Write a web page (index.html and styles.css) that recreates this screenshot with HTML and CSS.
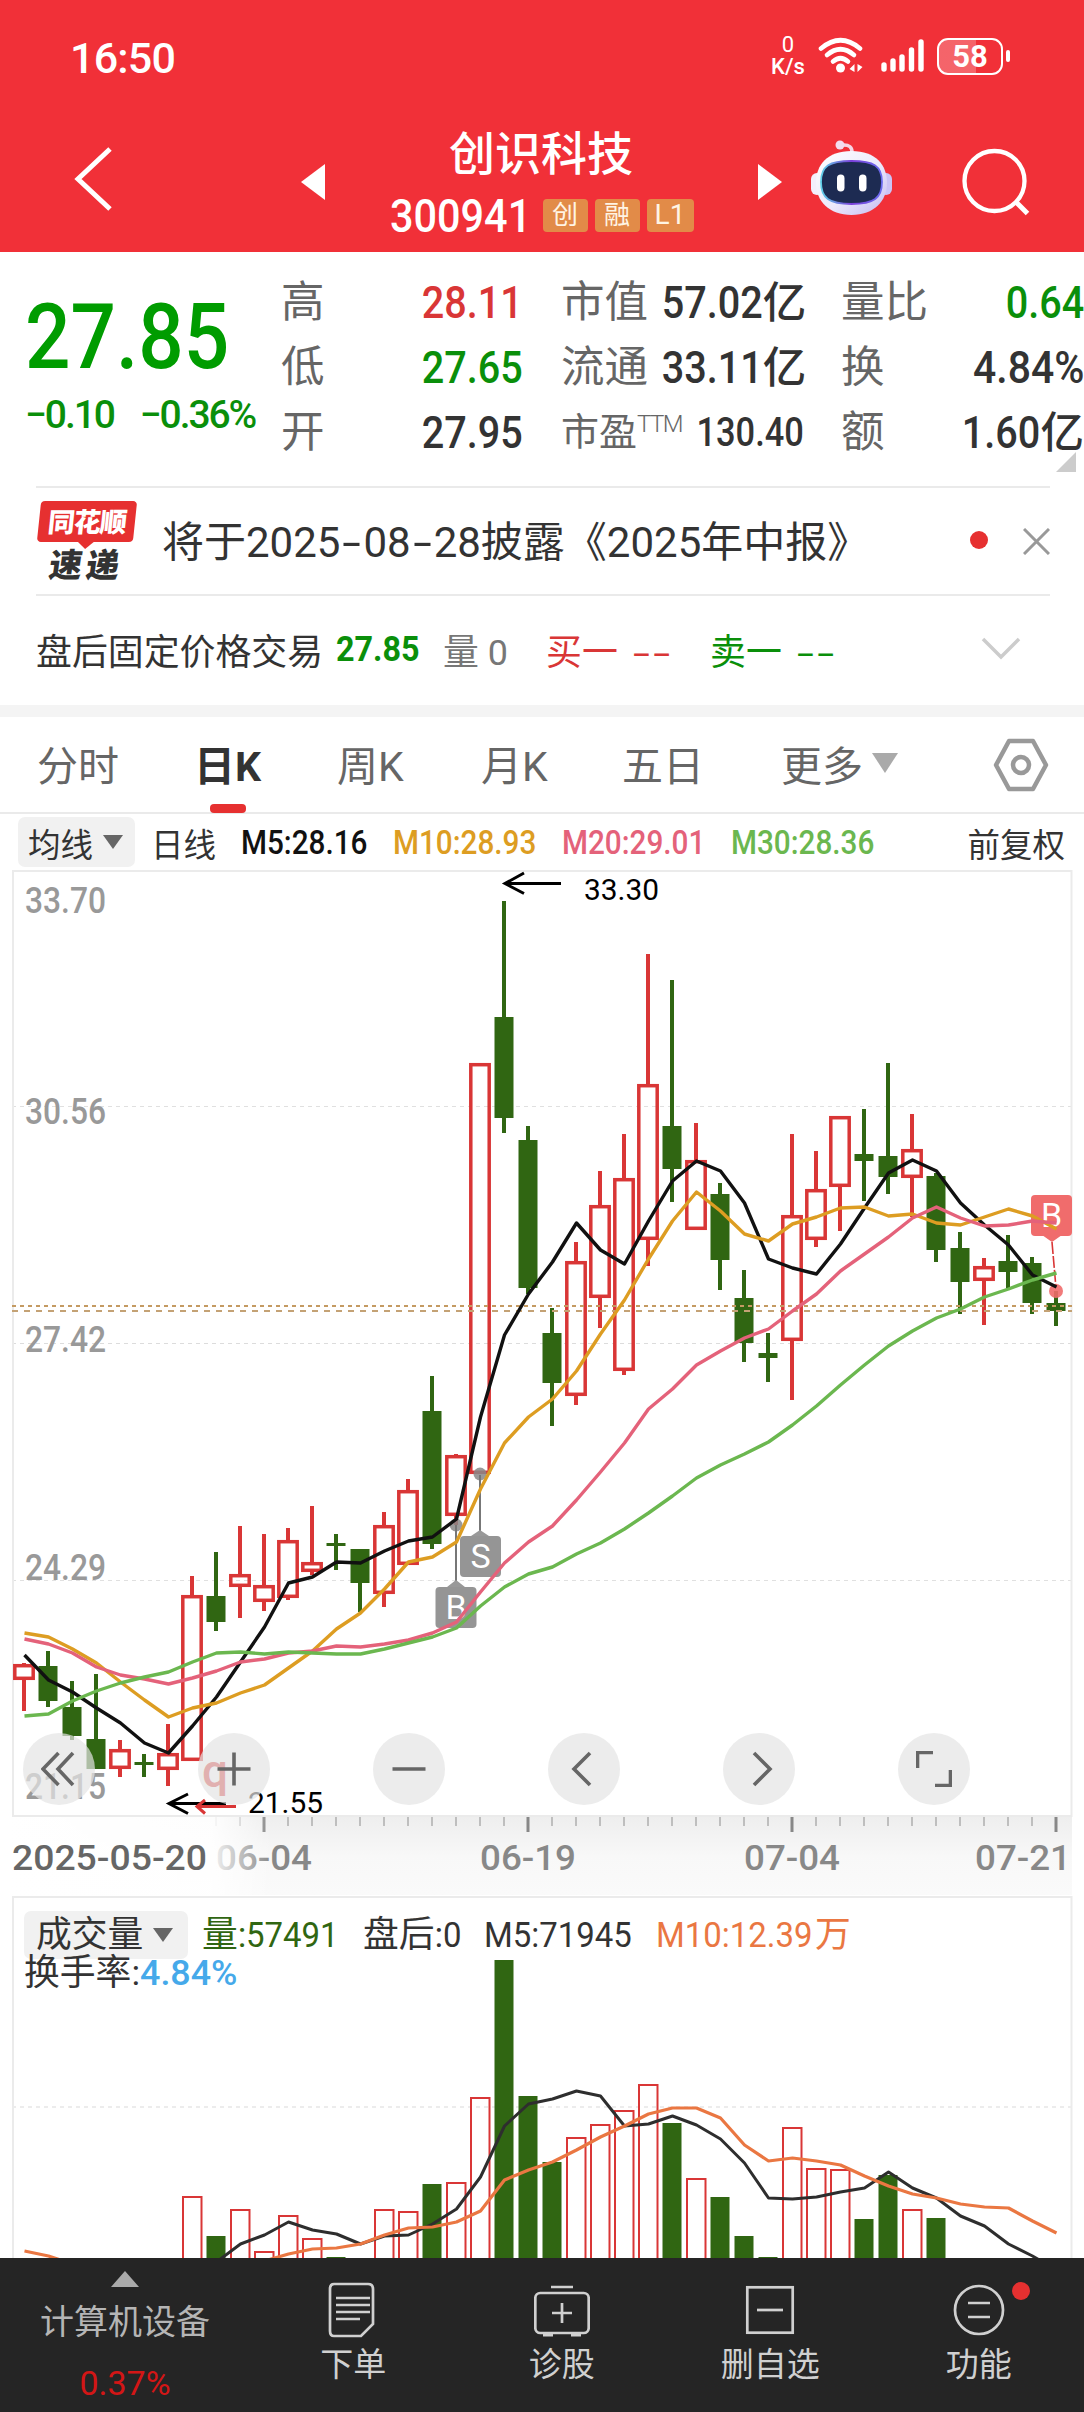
FILE: index.html
```html
<!DOCTYPE html>
<html lang="zh-CN">
<head>
    <meta charset="UTF-8">
    <meta name="viewport" content="width=device-width, initial-scale=1.0">
    <title>创识科技 300941</title>
    <link rel="stylesheet" href="styles.css">
</head>
<body>
    <header class="top">
        <div class="status-bar">
            <span class="clock">16:50</span>
            <div class="status-icons">
                <div class="net-speed"><span>0</span><span>K/s</span></div>
                <svg class="wifi" width="46" height="38" viewBox="0 0 46 38" fill="none" stroke="#fff" stroke-width="4.6" stroke-linecap="round">
                    <path d="M3 11.5Q22.500-5 42 11.500"/>
                    <path d="M9 18Q22.500 6.500 36 18"/>
                    <path d="M15 24.500Q22.500 18 30 24.500"/>
                    <circle cx="22.500" cy="31" r="4.500" fill="#fff" stroke="none"/>
                    <path d="M36.500 27v8l-5-3zM39.500 27v8l5-5z" fill="#fff" stroke="none"/>
                </svg>
                <svg class="signal" width="44" height="38" viewBox="0 0 44 38" stroke="#fff" stroke-width="5.4" stroke-linecap="round">
                    <path d="M3 28v4M12 24v8M21 20v12M30.500 13v19M40 5v27"/>
                </svg>
                <div class="battery"><span>58</span></div>
            </div>
        </div>
        <div class="title-bar">
            <svg class="back" width="42" height="70" viewBox="0 0 42 70" fill="none" stroke="#fff" stroke-width="5">
                <path d="M37 5L5 35L37 65"/>
            </svg>
            <svg class="prev" width="24" height="36" viewBox="0 0 24 36"><path d="M24 0v36L0 18z" fill="#fff"/></svg>
            <div class="stock">
                <h1>创识科技</h1>
                <div class="stock-code">
                    <span class="code">300941</span>
                    <span class="tag">创</span>
                    <span class="tag">融</span>
                    <span class="tag tag-l1">L1</span>
                </div>
            </div>
            <svg class="next" width="24" height="36" viewBox="0 0 24 36"><path d="M0 0v36l24-18z" fill="#fff"/></svg>
            <svg class="robot" width="84" height="78" viewBox="0 0 84 78">
                <defs>
                    <linearGradient id="head" x1="0" y1="0" x2="1" y2="1">
                        <stop offset="0" stop-color="#fff"/>
                        <stop offset=".55" stop-color="#ece9fb"/>
                        <stop offset="1" stop-color="#c3baf2"/>
                    </linearGradient>
                    <linearGradient id="visor" x1="0" y1="0" x2="1" y2="0">
                        <stop offset="0" stop-color="#5fd0e8"/>
                        <stop offset=".5" stop-color="#7a3fd8"/>
                        <stop offset="1" stop-color="#6a6cf0"/>
                    </linearGradient>
                </defs>
                <path d="M32 6q11-1 10 9" fill="none" stroke="#f6d5e4" stroke-width="3.500"/>
                <circle cx="30" cy="6" r="4.500" fill="#f3dcef"/>
                <rect x="1" y="34" width="12" height="22" rx="6" fill="#f3effc"/>
                <rect x="70" y="34" width="12" height="22" rx="6" fill="#cbc4f6"/>
                <path d="M41.500 12C66 12 77 26 77 44S64 76 41.500 76S6 62 6 44S17 12 41.500 12z" fill="url(#head)"/>
                <path d="M41.500 22C64 22 72 27 72 43S64 65 41.500 65S11 59 11 43S19 22 41.500 22z" fill="#1d2b52" stroke="url(#visor)" stroke-width="1.800"/>
                <rect x="27" y="35.500" width="7.500" height="17" rx="3.700" fill="#fff"/>
                <rect x="49" y="35.500" width="7.500" height="17" rx="3.700" fill="#fff"/>
            </svg>
            <svg class="search" width="70" height="70" viewBox="0 0 70 70" fill="none" stroke="#fff">
                <circle cx="34.500" cy="34" r="30" stroke-width="4.300"/>
                <path d="M55 54L67.500 66.500" stroke-width="5"/>
            </svg>
        </div>
    </header>

    <section class="quote">
        <div class="price-box">
            <div class="price">27.85</div>
            <div class="change"><span>−0.10</span><span>−0.36%</span></div>
        </div>
        <div class="stats">
            <div class="stat"><label>高</label><b class="num up">28.11</b></div>
            <div class="stat"><label>市值</label><b><i class="num">57.02</i>亿</b></div>
            <div class="stat"><label>量比</label><b class="num down">0.64</b></div>
            <div class="stat"><label>低</label><b class="num down">27.65</b></div>
            <div class="stat"><label>流通</label><b><i class="num">33.11</i>亿</b></div>
            <div class="stat"><label>换</label><b class="num pct">4.84%</b></div>
            <div class="stat"><label>开</label><b class="num">27.95</b></div>
            <div class="stat stat-small"><label>市盈<sup>TTM</sup></label><b class="num">130.40</b></div>
            <div class="stat"><label>额</label><b><i class="num">1.60</i>亿</b></div>
        </div>
        <svg class="corner" width="20" height="20" viewBox="0 0 20 20"><path d="M20 0v20H0z" fill="#ccc"/></svg>
    </section>

    <section class="notice">
        <div class="notice-logo">
            <span class="logo-top">同花顺</span>
            <span class="logo-bottom">速递</span>
        </div>
        <p>将于2025<s>-</s>08<s>-</s>28披露《2025年中报》</p>
        <span class="red-dot"></span>
        <svg width="27" height="27" viewBox="0 0 27 27" stroke="#999" stroke-width="3"><path d="M1 1l25 25M26 1L1 26"/></svg>
    </section>

    <section class="after-hours">
        <span class="ah-name">盘后固定价格交易</span>
        <span class="ah-price">27.85</span>
        <span class="ah-vol">量 0</span>
        <span class="ah-buy">买一 <s>--</s></span>
        <span class="ah-sell">卖一 <s>--</s></span>
        <svg width="40" height="24" viewBox="0 0 40 24" fill="none" stroke="#ccc" stroke-width="3.500"><path d="M2 2l18 18L38 2"/></svg>
    </section>

    <nav class="tabs">
        <span class="tab">分时</span>
        <span class="tab active">日K</span>
        <span class="tab">周K</span>
        <span class="tab">月K</span>
        <span class="tab">五日</span>
        <span class="tab more">更多 <svg width="26" height="20" viewBox="0 0 26 20"><path d="M0 0h26L13 20z" fill="#aaa"/></svg></span>
        <svg class="settings" width="56" height="54" viewBox="0 0 56 54" fill="none" stroke="#999" stroke-width="4.500" stroke-linejoin="round">
            <path d="M16 3h24L53 27L40 51H16L3 27z"/>
            <circle cx="28" cy="27" r="8"/>
        </svg>
    </nav>

    <div class="ma-bar">
        <span class="select">均线 <svg width="20" height="14" viewBox="0 0 20 14"><path d="M0 0h20L10 14z" fill="#666"/></svg></span>
        <span class="period">日线</span>
        <span class="ma ma5">M5:28.16</span>
        <span class="ma ma10">M10:28.93</span>
        <span class="ma ma20">M20:29.01</span>
        <span class="ma ma30">M30:28.36</span>
        <span class="adjust">前复权</span>
    </div>

    <section class="kline">
        <svg id="kline" width="1084" height="1026" viewBox="0 870 1084 1026">
            <defs>
                <linearGradient id="axis-v" x1="0" y1="0" x2="0" y2="1">
                    <stop offset="0" stop-color="#eeeeee"/>
                    <stop offset=".5" stop-color="#f8f8f8"/>
                    <stop offset="1" stop-color="#fafafa"/>
                </linearGradient>
                <linearGradient id="axis-h" x1="0" y1="0" x2="1" y2="0">
                    <stop offset="0" stop-color="#fff"/>
                    <stop offset=".78" stop-color="#fff" stop-opacity=".9"/>
                    <stop offset="1" stop-color="#fff" stop-opacity="0"/>
                </linearGradient>
            </defs>
        </svg>
        <div class="chart-tools">
            <button><svg viewBox="0 0 36 36"><path d="M17.500 2L2 18l15.500 16M32 2L17 18l15 16"/></svg></button>
            <button><svg viewBox="0 0 36 36"><path d="M18 1.500v33M1.500 18h33"/></svg></button>
            <button><svg viewBox="0 0 36 36"><path d="M1.500 18h33"/></svg></button>
            <button><svg viewBox="0 0 36 36"><path d="M24 2L8 18l16 16"/></svg></button>
            <button><svg viewBox="0 0 36 36"><path d="M13 2l16 16L13 34"/></svg></button>
            <button><svg viewBox="0 0 36 36"><path d="M1.500 17V1.500H17M34.500 19v15.500H19"/></svg></button>
        </div>
    </section>

    <section class="volume">
        <div class="vol-info">
            <div class="vol-row">
                <span class="select">成交量 <svg width="20" height="14" viewBox="0 0 20 14"><path d="M0 0h20L10 14z" fill="#666"/></svg></span>
                <span class="v-now">量:<i>57491</i></span>
                <span class="v-after">盘后:<i>0</i></span>
                <span class="v-m5"><i>M5:71945</i></span>
                <span class="v-m10"><i>M10:12.39</i>万</span>
            </div>
            <div class="turnover">换手率:<i>4.84%</i></div>
        </div>
        <svg id="volume" width="1084" height="362" viewBox="0 1896 1084 362"></svg>
    </section>

    <footer class="bottom-nav">
        <div class="nav-item sector">
            <svg width="28" height="16" viewBox="0 0 28 16"><path d="M14 0l14 16H0z" fill="#aaa"/></svg>
            <span>计算机设备</span>
            <em>0.37%</em>
        </div>
        <div class="nav-item">
            <svg width="56" height="56" viewBox="0 0 56 56">
                <path d="M9 2h34q5 0 5 5v35L36 54H9q-4 0-4-5V7q0-5 4-5z"/>
                <path d="M11 16h34M11 23h34M11 30h34M11 37h24" stroke-width="2.600"/>
            </svg>
            <span>下单</span>
        </div>
        <div class="nav-item">
            <svg width="56" height="56" viewBox="0 0 56 56">
                <rect x="1.300" y="11" width="53.400" height="40" rx="5"/>
                <path d="M17 5h22M28 21v20M18 31h20"/>
                <path d="M9 52.500h10M37 52.500h10" stroke-width="4"/>
            </svg>
            <span>诊股</span>
        </div>
        <div class="nav-item">
            <svg width="56" height="56" viewBox="0 0 56 56">
                <rect x="5.300" y="5.300" width="45.400" height="45.400"/>
                <path d="M15 28h26"/>
            </svg>
            <span>删自选</span>
        </div>
        <div class="nav-item">
            <svg width="56" height="56" viewBox="0 0 56 56">
                <circle cx="28" cy="28" r="24"/>
                <path d="M17 21h22M17 35h22"/>
            </svg>
            <span>功能</span>
            <b class="nav-dot"></b>
        </div>
    </footer>

    <script src="script.js"></script>
</body>
</html>
```

FILE: styles.css
```css
:root {
    --red: #d93636;
    --green: #0a8f0a;
    --dark: #333;
    --gray: #666;
    --line: #eaeaea;
}

* {
    box-sizing: border-box;
}

body {
    margin: 0;
    width: 1084px;
    height: 2412px;
    overflow: hidden;
    background: #fff;
    color: var(--dark);
    font-family: Roboto, "Noto Sans CJK SC", sans-serif;
    white-space: nowrap;
}

svg {
    display: block;
    flex: none;
}

i, em, s {
    font-style: normal;
    text-decoration: none;
}

/* header */
.top {
    height: 252px;
    background: #f13038;
    color: #fff;
}

.status-bar {
    height: 112px;
    padding: 0 74px 0 70px;
    display: flex;
    justify-content: space-between;
    align-items: center;
}

.clock {
    font-size: 43px;
    font-weight: 500;
    letter-spacing: -0.8px;
    padding-top: 3px;
}

.status-icons {
    display: flex;
    align-items: center;
}

.net-speed {
    width: 36px;
    margin-right: 12px;
    display: flex;
    flex-direction: column;
    align-items: center;
    font-size: 22px;
    line-height: 22px;
    font-weight: 500;
}

.net-speed span:first-child {
    font-weight: 400;
}

.wifi {
    margin-right: 17px;
}

.signal {
    margin-right: 12px;
}

.battery {
    position: relative;
    width: 66px;
    height: 37px;
    margin-right: 7px;
    border: 2.5px solid #fff;
    border-radius: 11px;
    background: linear-gradient(90deg, rgba(255, 255, 255, 0.25) 60%, transparent 60%);
    font-size: 31px;
    font-weight: 700;
    line-height: 33px;
    text-align: center;
}

.battery::after {
    content: '';
    position: absolute;
    right: -9px;
    top: 10px;
    width: 4px;
    height: 12px;
    border-radius: 2px;
    background: #fff;
}

.title-bar {
    height: 140px;
    display: flex;
    align-items: center;
    padding: 0 54px 0 73px;
}

.back {
    margin-right: 186px;
    margin-bottom: 6px;
}

.stock {
    width: 433px;
    display: flex;
    flex-direction: column;
    align-items: center;
}

.stock h1 {
    margin: 0 0 13px;
    padding-right: 1px;
    font-size: 46px;
    font-weight: 500;
    line-height: 58px;
}

.stock-code {
    display: flex;
    align-items: center;
    gap: 7px;
    height: 40px;
    margin-bottom: 4px;
}

.code {
    width: 146px;
    font-size: 46px;
    font-weight: 500;
    transform: scaleX(0.9);
    transform-origin: left;
}

.tag {
    width: 45px;
    height: 33px;
    border-radius: 4px;
    background: #e28b48;
    font-size: 26px;
    line-height: 32px;
    text-align: center;
    color: #fff4e4;
}

.tag-l1 {
    width: 47px;
    font-size: 28px;
}

.robot {
    margin: 0 0 8px 28px;
}

.search {
    margin-left: auto;
}

/* quote */
.quote {
    position: relative;
    height: 234px;
    display: flex;
}

.price-box {
    width: 281px;
    padding: 39px 0 0 25px;
    color: #009c00;
}

.price {
    font-size: 90px;
    font-weight: 500;
    line-height: 94px;
    transform: scaleX(0.89);
    transform-origin: left;
}

.change {
    display: flex;
    gap: 26px;
    margin-top: 3px;
    font-size: 39px;
    font-weight: 500;
    line-height: 54px;
    letter-spacing: -2.1px;
    color: var(--green);
}

.stats {
    display: grid;
    grid-template-columns: 242px 242px 243px;
    grid-auto-rows: 65px;
    column-gap: 38px;
    padding-top: 18px;
}

.stat {
    display: flex;
    justify-content: space-between;
    align-items: center;
    font-size: 43.5px;
    line-height: 65px;
}

.stat label {
    color: var(--gray);
}

.stat b {
    font-weight: 500;
}

.num {
    display: inline-block;
    font-size: 45px;
    transform: scaleX(0.88);
    transform-origin: right;
}

.pct {
    transform: scaleX(0.91);
}

.stat-small {
    font-size: 38px;
}

.stat-small .num {
    font-size: 40px;
    transform: translateX(-3px) scaleX(0.86);
}

.stat sup {
    font-size: 24px;
    line-height: 0;
    font-weight: 300;
    vertical-align: 13px;
    letter-spacing: -1.5px;
}

.up {
    color: var(--red);
}

.down {
    color: var(--green);
}

.corner {
    position: absolute;
    right: 8px;
    bottom: 14px;
}

/* notice */
.notice {
    height: 110px;
    margin: 0 34px 0 36px;
    border-top: 2px solid var(--line);
    border-bottom: 2px solid var(--line);
    display: flex;
    align-items: center;
}

.notice-logo {
    width: 101px;
    margin-right: 25px;
    display: flex;
    flex-direction: column;
    align-items: center;
    font-weight: 900;
    font-family: "Noto Sans CJK SC", sans-serif;
}

.logo-top {
    position: relative;
    width: 96px;
    height: 41px;
    border-radius: 4px;
    background: #e63030;
    color: #fff;
    font-size: 27px;
    line-height: 40px;
    letter-spacing: -1px;
    text-align: center;
    transform: skewX(-6deg);
}

.logo-top::after {
    content: '';
    position: absolute;
    left: 40px;
    bottom: -7px;
    border: 9px solid transparent;
    border-bottom: 0;
    border-top: 8px solid #e63030;
}

.logo-bottom {
    height: 39px;
    font-size: 33px;
    line-height: 42px;
    letter-spacing: 4px;
    transform: skewX(-8deg);
}

.notice p {
    margin: 0 0 6px;
    flex: 1;
    font-size: 42px;
}

.notice s {
    display: inline-block;
    width: 23px;
    text-align: center;
    transform: scaleX(1.6);
}

.red-dot {
    width: 18px;
    height: 18px;
    margin: 0 35px 2px 0;
    border-radius: 50%;
    background: #e63030;
}

/* after-hours trading */
.after-hours {
    height: 109px;
    padding: 0 63px 3px 36px;
    display: flex;
    align-items: center;
    font-size: 35.9px;
}

.ah-name {
    width: 300px;
}

.ah-price {
    width: 107px;
    font-weight: 700;
    color: var(--green);
    transform: scaleX(0.9);
    transform-origin: left;
}

.ah-vol {
    width: 103px;
    color: #777;
}

.ah-buy {
    width: 164px;
    color: var(--red);
}

.ah-sell {
    flex: 1;
    color: var(--green);
}

.after-hours s {
    display: inline-block;
    margin-left: 6px;
    letter-spacing: 2px;
    transform: scaleX(1.7);
    transform-origin: left;
}

/* tabs */
.tabs {
    height: 109px;
    border-top: 12px solid #f4f4f4;
    border-bottom: 2px solid var(--line);
    padding-left: 37px;
    display: flex;
    align-items: center;
    font-size: 41px;
    color: var(--gray);
}

.tab {
    position: relative;
    width: 141px;
    padding-bottom: 4px;
}

.tab:first-child {
    width: 157px;
}

.tab:nth-child(3) {
    width: 144px;
}

.tab:nth-child(5) {
    width: 159px;
}

.tab.active {
    width: 143px;
    color: var(--dark);
    font-weight: 700;
}

.tab.active::after {
    content: '';
    position: absolute;
    left: 16px;
    bottom: -16px;
    width: 36px;
    height: 9px;
    border-radius: 4px;
    background: #e63030;
}

.tab.more {
    width: 210px;
    display: flex;
    align-items: center;
    gap: 9px;
}

.settings {
    margin-left: 2px;
}

/* moving averages */
.ma-bar {
    height: 56px;
    padding: 3px 0 3px 18px;
    display: flex;
    align-items: center;
    font-size: 32.5px;
}

.select {
    display: flex;
    align-items: center;
    gap: 10px;
    height: 50px;
    padding: 0 12px 0 10px;
    border-radius: 7px;
    background: #f1f1f1;
}

.period {
    width: 90px;
    margin-left: 16px;
}

.ma {
    width: 152px;
    font-size: 33px;
    font-weight: 500;
    transform: scaleX(0.9);
    transform-origin: left;
}

.ma10, .ma20, .ma30 {
    width: 169px;
}

.ma5 { color: #111; }
.ma10 { color: #dd9d22; }
.ma20 { color: #e4627a; }
.ma30 { color: #6bb74f; }

.adjust {
    margin: 0 19px 0 auto;
}

/* charts */
.kline, .volume {
    position: relative;
}

.chart-tools {
    position: absolute;
    left: 23px;
    top: 863px;
    display: flex;
    gap: 103px;
}

.chart-tools button {
    width: 72px;
    height: 72px;
    padding: 18px;
    border: none;
    border-radius: 50%;
    background: rgba(228, 228, 228, 0.7);
}

.chart-tools svg {
    width: 36px;
    height: 36px;
    fill: none;
    stroke: #666;
    stroke-width: 3.6;
}

.axis-price {
    font-size: 36px;
    font-weight: 500;
    fill: #999;
}

.mark-price {
    font-size: 30px;
    fill: #000;
}

.axis-date {
    font-size: 35px;
    font-weight: 500;
    fill: #888;
}

.axis-date.first {
    fill: #666;
}

.marker {
    font-size: 34px;
    fill: #fff;
    text-anchor: middle;
}

.note {
    font-size: 46px;
    font-weight: 500;
    fill: #d93636;
}

.vol-info {
    position: absolute;
    left: 24px;
    top: 9px;
    font-size: 35.8px;
}

.vol-row {
    display: flex;
    align-items: baseline;
    height: 50px;
}

.vol-row .select {
    width: 164px;
    height: 48px;
    margin: 2px 14px 0 0;
    padding-left: 12px;
    line-height: 46px;
}

.vol-row i, .turnover i {
    display: inline-block;
    transform: scaleX(0.92);
    transform-origin: left;
}

.v-now {
    width: 161px;
    color: #306612;
}

.v-after {
    width: 121px;
}

.v-m5 {
    width: 172px;
}

.v-m10 {
    color: #ea7742;
}

.v-m10 i {
    margin-right: -11px;
}

.turnover {
    line-height: 36px;
}

.turnover i {
    color: #45a9ea;
    font-weight: 500;
    transform: none;
}

/* bottom nav */
.bottom-nav {
    position: relative;
    height: 154px;
    background: #252525;
    color: #d0d0d0;
    display: flex;
    font-size: 33px;
}

.nav-item {
    position: relative;
    left: -1px;
    flex: 1;
    padding-top: 24px;
    display: flex;
    flex-direction: column;
    align-items: center;
}

.nav-item > svg {
    fill: none;
    stroke: #d0d0d0;
    stroke-width: 2.7;
}

.nav-item span {
    margin-top: 3px;
    line-height: 48px;
}

.nav-item.sector {
    left: 0;
    flex: none;
    width: 250px;
    padding-top: 13px;
    color: #b5b5b5;
    font-size: 34px;
}

.nav-item.sector svg {
    stroke: none;
}

.nav-item.sector span {
    margin-top: 11px;
}

.sector em {
    margin-top: 13px;
    line-height: 48px;
    color: #d31616;
}

.nav-dot {
    position: absolute;
    left: 137px;
    top: 24px;
    width: 18px;
    height: 18px;
    border-radius: 50%;
    background: #e63030;
}
```

FILE: script.js
```js
const RED = '#d93636';
const GREEN = '#306612';
const STEP = 24;
const BOTTOM = 2258;

// [up, high, body top, body bottom, low]
const candles = [
    [1, 1663, 1664, 1680, 1711], [0, 1651, 1666, 1701, 1707], [0, 1681, 1707, 1736, 1740], [0, 1674, 1739, 1769, 1769],
    [1, 1740, 1749, 1769, 1777], [0, 1754, 1762, 1765, 1777], [1, 1724, 1753, 1770, 1786], [1, 1576, 1595, 1761, 1761],
    [0, 1552, 1596, 1622, 1631], [1, 1526, 1574, 1587, 1618], [1, 1534, 1585, 1602, 1611], [1, 1528, 1540, 1598, 1600],
    [1, 1506, 1562, 1572, 1575], [0, 1534, 1543, 1546, 1570], [0, 1549, 1549, 1583, 1612], [1, 1512, 1525, 1594, 1607],
    [1, 1479, 1490, 1565, 1565], [0, 1376, 1411, 1544, 1549], [1, 1454, 1455, 1516, 1525], [1, 1063, 1063, 1474, 1474],
    [0, 901, 1017, 1118, 1133], [0, 1126, 1140, 1288, 1294], [0, 1308, 1333, 1383, 1426], [1, 1242, 1261, 1396, 1405],
    [1, 1171, 1205, 1298, 1328], [1, 1134, 1178, 1371, 1375], [1, 954, 1084, 1240, 1266], [0, 980, 1126, 1169, 1202],
    [1, 1123, 1160, 1230, 1230], [0, 1183, 1194, 1260, 1290], [0, 1270, 1298, 1343, 1362], [0, 1333, 1353, 1358, 1382],
    [1, 1134, 1215, 1341, 1400], [1, 1151, 1189, 1240, 1247], [1, 1116, 1116, 1187, 1231], [0, 1109, 1154, 1161, 1201],
    [0, 1063, 1156, 1177, 1194], [1, 1114, 1149, 1178, 1217], [0, 1173, 1176, 1250, 1262], [0, 1232, 1248, 1282, 1314],
    [1, 1258, 1266, 1281, 1325], [0, 1235, 1261, 1272, 1288], [0, 1257, 1263, 1303, 1314], [0, 1291, 1303, 1311, 1326]
];

const m5 = [1655, 1680, 1692, 1708, 1723, 1743, 1753, 1726, 1697, 1662, 1627, 1583, 1577, 1562, 1563, 1551, 1541, 1537, 1519, 1417, 1335, 1294, 1262, 1223, 1250, 1264, 1221, 1181, 1161, 1171, 1203, 1259, 1268, 1274, 1244, 1208, 1173, 1160, 1171, 1203, 1225, 1245, 1275, 1287];
const m10 = [1633, 1637, 1649, 1663, 1682, 1700, 1717, 1708, 1703, 1693, 1685, 1668, 1651, 1629, 1613, 1589, 1562, 1557, 1542, 1489, 1443, 1417, 1399, 1371, 1334, 1300, 1259, 1221, 1192, 1211, 1234, 1241, 1224, 1217, 1208, 1207, 1216, 1214, 1223, 1225, 1217, 1209, 1216, 1229];
const m20 = [1639, 1644, 1653, 1667, 1675, 1679, 1684, 1678, 1671, 1662, 1659, 1653, 1651, 1646, 1647, 1644, 1640, 1633, 1622, 1592, 1563, 1542, 1526, 1500, 1472, 1443, 1409, 1389, 1365, 1351, 1338, 1329, 1311, 1294, 1271, 1254, 1237, 1218, 1207, 1218, 1226, 1225, 1221, 1223];
const m30 = [1716, 1714, 1701, 1691, 1683, 1677, 1672, 1662, 1653, 1652, 1654, 1652, 1653, 1654, 1654, 1649, 1643, 1637, 1628, 1606, 1587, 1574, 1567, 1554, 1543, 1529, 1513, 1496, 1478, 1465, 1454, 1442, 1425, 1406, 1385, 1365, 1346, 1331, 1318, 1309, 1297, 1289, 1280, 1273];

// bar tops, 0 = below the visible part
const vols = [0, 0, 0, 0, 0, 0, 0, 2196, 2236, 2209, 2251, 2215, 2238, 2257, 0, 2209, 2211, 2184, 2182, 2097, 1960, 2096, 2162, 2137, 2124, 2110, 2084, 2123, 2178, 2197, 2236, 2257, 2127, 2168, 2169, 2219, 2175, 2209, 2218, 0, 0, 0, 0, 0];
const v5 = [2300, 2300, 2300, 2300, 2300, 2300, 2300, 2280, 2262, 2244, 2235, 2222, 2230, 2234, 2244, 2236, 2235, 2224, 2209, 2177, 2126, 2104, 2099, 2091, 2096, 2126, 2124, 2116, 2125, 2139, 2163, 2198, 2199, 2197, 2192, 2188, 2172, 2188, 2198, 2216, 2226, 2244, 2256, 2270];
const v10 = [2251, 2256, 2264, 2290, 2300, 2300, 2300, 2290, 2280, 2270, 2261, 2254, 2249, 2248, 2244, 2235, 2228, 2227, 2222, 2211, 2180, 2170, 2162, 2150, 2137, 2126, 2114, 2108, 2108, 2118, 2145, 2161, 2158, 2161, 2165, 2176, 2186, 2194, 2198, 2204, 2207, 2208, 2221, 2233];

const x = i => 24 + i * STEP;

function line(values, color, width) {
    const pts = values.map((y, i) => `${x(i) + 0.5},${y}`).join(' ');
    return `<polyline points="${pts}" fill="none" stroke="${color}" stroke-width="${width}" stroke-linejoin="round"/>`;
}

function text(str, left, base, width, cls) {
    return `<text class="${cls}" x="${left}" y="${base}" textLength="${width}" lengthAdjust="spacingAndGlyphs">${str}</text>`;
}

function hline(y, color, dash, width) {
    return `<path d="M12 ${y}H1072" stroke="${color}" stroke-width="${width}" stroke-dasharray="${dash}"/>`;
}

function drawCandle([up, high, top, bottom, low], i) {
    const cx = x(i);
    if (up) {
        return `<path d="M${cx} ${high}V${top + 1}M${cx} ${bottom - 1}V${low}" stroke="${RED}" stroke-width="4"/>` +
            `<rect x="${cx - 9.2}" y="${top + 1.7}" width="18.400" height="${bottom - top - 3.4}" fill="none" stroke="${RED}" stroke-width="3.500"/>`;
    }
    return `<path d="M${cx} ${high}V${low}" stroke="${GREEN}" stroke-width="4"/>` +
        `<rect x="${cx - 9.5}" y="${top}" width="19" height="${bottom - top}" fill="${GREEN}"/>`;
}

function marker(letter, cx, top, color) {
    return `<rect x="${cx - 20.5}" y="${top}" width="41" height="41" rx="4" fill="${color}"/>` +
        `<text class="marker" x="${cx}" y="${top + 32}">${letter}</text>`;
}

function drawKline() {
    let out = '';
    out += hline(1106.5, '#e0e0e0', '4 4', 1.2) + hline(1343.5, '#dcdcdc', '4 4', 1.2) + hline(1580.5, '#e0e0e0', '4 4', 1.2);
    out += '<rect x="13" y="871" width="1058.500" height="945" fill="none" stroke="#ebebeb" stroke-width="2"/>';

    [['33.70', 913], ['30.56', 1124], ['27.42', 1352], ['24.29', 1580], ['21.15', 1799]]
        .forEach(([s, y]) => out += text(s, 25, y, 81, 'axis-price'));

    out += candles.map(drawCandle).join('');
    out += hline(1306, '#c49a62', '4 4', 2) + hline(1311, '#c4a275', '6 6', 2);

    // trade markers
    out += '<circle cx="456" cy="1525" r="6.500" fill="#888" opacity=".85"/><circle cx="480" cy="1474" r="6.500" fill="#888" opacity=".85"/>';
    out += '<path d="M456 1525V1588M480 1475V1536" stroke="#777" stroke-width="2"/>';
    out += '<path d="M447 1587l9-7 9 7zM471 1536l9-6 9 6z" fill="#999"/>';
    out += marker('B', 456, 1587, '#959595') + marker('S', 480.5, 1536, '#959595');
    out += '<path d="M1042 1235l10 7 10-7z" fill="#f06c6c"/>' + marker('B', 1051.5, 1195, '#f06c6c');
    out += '<path d="M1052 1242L1056 1288" stroke="#d93636" stroke-width="1.600" stroke-dasharray="12 2"/>';
    out += '<circle cx="1056" cy="1291" r="7" fill="#f06c6c" opacity=".9"/>';

    out += line(m5, '#111', 3.4) + line(m10, '#dd9d22', 3.4) + line(m20, '#e4627a', 3.4) + line(m30, '#6bb74f', 3.4);

    // high / low arrows
    out += '<path d="M561 883.500H505M524 873l-19 10.500 19 10" fill="none" stroke="#000" stroke-width="3"/>' + text('33.30', 584, 900, 75, 'mark-price');
    out += '<path d="M226 1803.500H169M188 1794l-19 9.500 19 10" fill="none" stroke="#000" stroke-width="3"/>' + text('21.55', 248, 1813, 75, 'mark-price');
    out += '<path d="M236 1806.500H197M205 1800l-8 6.500 8 7" fill="none" stroke="#d93636" stroke-width="3"/>';
    out += '<text class="note" x="202" y="1787">q</text>';

    // date axis
    out += '<rect x="12" y="1817" width="1060" height="78" fill="url(#axis-v)"/>';
    for (let i = 8; i < 44; i++) {
        const major = (i - 10) % 11 === 0;
        out += `<path d="M${x(i)} 1817v${major ? 15 : 9}" stroke="${major ? '#888' : '#aaa'}" stroke-width="${major ? 3 : 1.4}"/>`;
    }
    [['06-04', 216], ['06-19', 480], ['07-04', 744], ['07-21', 975]]
        .forEach(([s, left]) => out += text(s, left, 1870, 96, 'axis-date'));
    out += '<rect x="0" y="1817" width="272" height="78" fill="url(#axis-h)"/>';
    out += text('2025-05-20', 12, 1870, 195, 'axis-date first');
    document.getElementById('kline').insertAdjacentHTML('beforeend', out);
}

function drawVolume() {
    let out = hline(2107, '#e6e6e6', '4 4', 1.5);
    out += '<path d="M13 2258V1897H1071.500V2258" fill="none" stroke="#ebebeb" stroke-width="2"/>';
    vols.forEach((top, i) => {
        if (!top) return;
        const up = candles[i][0];
        const h = BOTTOM - top + 4;
        out += up
            ? `<rect x="${x(i) - 9}" y="${top + 1}" width="18.500" height="${h}" fill="none" stroke="${RED}" stroke-width="2"/>`
            : `<rect x="${x(i) - 9.5}" y="${top}" width="19" height="${h}" fill="${GREEN}"/>`;
    });
    out += line(v5, '#2e2e2e', 3) + line(v10, '#ea7742', 3.2);
    document.getElementById('volume').insertAdjacentHTML('beforeend', out);
}

drawKline();
drawVolume();
```
